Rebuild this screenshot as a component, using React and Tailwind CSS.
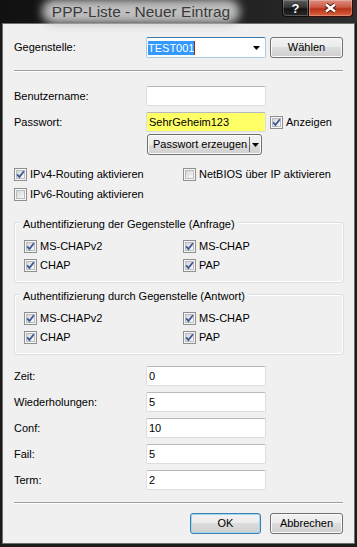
import React from 'react';

const btn =
  'flex h-[21px] items-center justify-center rounded-[3px] border border-[#707070] bg-[linear-gradient(#f2f2f2,#ebebeb_50%,#dddddd_50%,#cfcfcf)] shadow-[inset_0_0_0_1px_#fbfbfb]';

function Check({ checked }) {
  return (
    <span className="relative flex h-[13px] w-[13px] shrink-0 border border-[#8e8f8f] bg-[#f6f6f6] p-px">
      <span className="h-full w-full border border-[#b9bcc0] bg-[linear-gradient(135deg,#d6d6d6,#f9f9f9)]" />
      {checked && (
        <svg className="absolute inset-0" width="11" height="11" viewBox="0 0 11 11">
          <path d="M2.2 5.4 L4.4 8 L8.9 2.2" fill="none" stroke="#3e5a96" strokeWidth="1.8" />
        </svg>
      )}
    </span>
  );
}

function CheckLabel({ checked, children, className = '' }) {
  return (
    <div className={`flex items-center gap-[3px] ${className}`}>
      <Check checked={checked} />
      <span>{children}</span>
    </div>
  );
}

function TextBox({ value, yellow }) {
  return (
    <div
      className={`flex h-[20px] w-[120px] items-center rounded-[2px] border border-[#dadde3] border-t-[#b5b8be] pl-[2px] ${
        yellow ? 'bg-[#ffff66]' : 'bg-white'
      }`}
    >
      {value}
    </div>
  );
}

function FieldRow({ label, value, className = '' }) {
  return (
    <div className={`flex h-[20px] items-center pl-[11px] ${className}`}>
      <span className="w-[132px]">{label}</span>
      <TextBox value={value} />
    </div>
  );
}

function Group({ title, className = '' }) {
  return (
    <div
      className={`relative ml-[11px] h-[61px] w-[330px] rounded-[3px] border border-[#d5dfe5] pl-[9px] pt-[14px] shadow-[inset_0_0_0_1px_#fff] ${className}`}
    >
      <span className="absolute -top-[6px] left-[5px] bg-[#f0f0f0] px-[3px] leading-[14px]">{title}</span>
      <div className="flex h-[19px] items-center">
        <CheckLabel checked className="w-[159px]">MS-CHAPv2</CheckLabel>
        <CheckLabel checked>MS-CHAP</CheckLabel>
      </div>
      <div className="flex h-[19px] items-center">
        <CheckLabel checked className="w-[159px]">CHAP</CheckLabel>
        <CheckLabel checked>PAP</CheckLabel>
      </div>
    </div>
  );
}

function Separator({ className = '' }) {
  return <div className={`ml-[11px] h-[2px] w-[329px] border-y border-t-[#a0a0a0] border-b-white ${className}`} />;
}

export default function App() {
  return (
    <div className="flex h-[547px] w-[357px] flex-col bg-[#1b1b1b] font-['Liberation_Sans',Arial,sans-serif] text-[11px] text-black">
      {/* title bar */}
      <div className="flex h-[23px] shrink-0 bg-[linear-gradient(90deg,#111111,#1c1c1c_55%,#2e2e2e)]">
        <div className="flex flex-1 items-center justify-center">
          <span className="relative text-[15.5px] leading-none text-[#3a3a3a]">
            <span className="absolute -inset-x-[10px] -inset-y-[5px] rounded-full bg-[#bfbfbf] blur-[5px]" />
            <span className="relative">PPP-Liste - Neuer Eintrag</span>
          </span>
        </div>
        <div className="mr-[4px] flex h-[17px]">
          <div className="flex w-[27px] items-center justify-center rounded-bl-[4px] border border-t-0 border-[#0c0c0c] bg-[linear-gradient(#5c5c5c,#353535_45%,#141414_55%,#2a2a2a)] shadow-[inset_0_0_0_1px_rgba(255,255,255,0.22)]">
            <span className="text-[13px] font-bold leading-none text-white [text-shadow:0_0_2px_#000]">?</span>
          </div>
          <div className="flex w-[44px] items-center justify-center rounded-br-[4px] border border-l-0 border-t-0 border-[#3a0c04] bg-[linear-gradient(#dd8f80,#cc5a44_45%,#b8321a_55%,#d8643f)] shadow-[inset_0_0_0_1px_rgba(255,255,255,0.25)]">
            <svg width="13" height="10" viewBox="0 0 13 10">
              <path d="M2 1.5 L11 8.5 M11 1.5 L2 8.5" stroke="#4a160c" strokeWidth="4.2" />
              <path d="M2 1.5 L11 8.5 M11 1.5 L2 8.5" stroke="#fff" strokeWidth="2.4" />
            </svg>
          </div>
        </div>
      </div>

      {/* client area */}
      <div className="mx-[2px] mb-[3px] flex flex-1 flex-col border border-[#6e6e6e] bg-[#f0f0f0]">
        <div className="mt-[13px] flex h-[21px] items-center pl-[11px]">
          <span className="w-[132px]">Gegenstelle:</span>
          <div className="flex h-[21px] w-[120px] items-center rounded-[2px] border border-[#a9cbe6] border-t-[#3d7bad] bg-white pl-[1px] pr-[5px]">
            <span className="bg-[#3399ff] leading-[14px] text-white">TEST001</span>
            <span className="h-[14px] w-px bg-[#7a3a10]" />
            <svg className="ml-auto" width="7" height="4" viewBox="0 0 7 4">
              <path d="M0 0 H7 L3.5 4 Z" fill="#000" />
            </svg>
          </div>
          <div className={`ml-[4px] w-[73px] ${btn}`}>Wählen</div>
        </div>

        <Separator className="mt-[12px]" />

        <FieldRow label="Benutzername:" className="mt-[14px]" />

        <div className="mt-[6px] flex h-[20px] items-center pl-[11px]">
          <span className="w-[132px]">Passwort:</span>
          <TextBox value="SehrGeheim123" yellow />
          <CheckLabel checked className="ml-[4px]">Anzeigen</CheckLabel>
        </div>

        <div className="mt-[2px] flex h-[21px] pl-[144px]">
          <div className={`w-[115px] !justify-start ${btn}`}>
            <span className="flex-1 pl-[5px]">Passwort erzeugen</span>
            <span className="h-[15px] w-px bg-[#6a6a6a]" />
            <svg className="mx-[2px]" width="7" height="4" viewBox="0 0 7 4">
              <path d="M0 0 H7 L3.5 4 Z" fill="#000" />
            </svg>
          </div>
        </div>

        <div className="mt-[9px] flex h-[20px] items-center pl-[11px]">
          <CheckLabel checked className="w-[169px]">IPv4-Routing aktivieren</CheckLabel>
          <CheckLabel>NetBIOS über IP aktivieren</CheckLabel>
        </div>
        <div className="flex h-[20px] items-center pl-[11px]">
          <CheckLabel>IPv6-Routing aktivieren</CheckLabel>
        </div>

        <Group title="Authentifizierung der Gegenstelle (Anfrage)" className="mt-[18px]" />
        <Group title="Authentifizierung durch Gegenstelle (Antwort)" className="mt-[11px]" />

        <FieldRow label="Zeit:" value="0" className="mt-[11px]" />
        <FieldRow label="Wiederholungen:" value="5" className="mt-[6px]" />
        <FieldRow label="Conf:" value="10" className="mt-[6px]" />
        <FieldRow label="Fail:" value="5" className="mt-[6px]" />
        <FieldRow label="Term:" value="2" className="mt-[6px]" />

        <Separator className="mt-[12px]" />

        <div className="mt-[9px] flex gap-[9px] pl-[187px]">
          <div className={`w-[71px] !border-[#3c7fb1] !shadow-[inset_0_0_0_1px_#9fd8f4] ${btn}`}>OK</div>
          <div className={`w-[73px] ${btn}`}>Abbrechen</div>
        </div>
      </div>
    </div>
  );
}
